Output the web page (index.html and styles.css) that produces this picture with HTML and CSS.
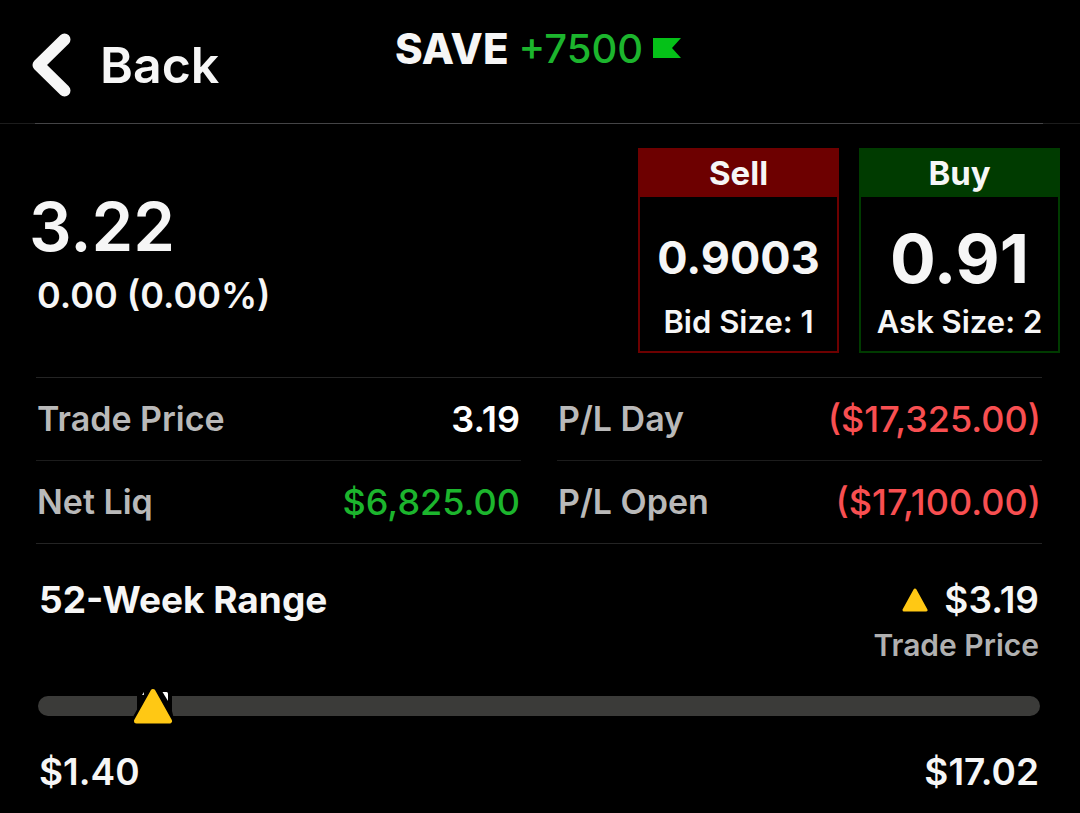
FILE: index.html
```html
<!DOCTYPE html>
<html lang="en">
<head>
<meta charset="utf-8">
<meta name="viewport" content="width=device-width, initial-scale=1">
<title>SAVE quote</title>
<link rel="stylesheet" href="styles.css">
</head>
<body>
<header class="topbar">
  <div class="topbar-side">
    <button class="back" type="button">
      <svg class="back-icon" viewBox="0 0 40 64" aria-hidden="true"><path d="M32.500 6.500L6.500 32L32.500 57.500" fill="none" stroke="currentColor" stroke-width="12" stroke-linecap="round" stroke-linejoin="round"/></svg>
      Back
    </button>
  </div>
  <h1 class="title">
    <span class="symbol">SAVE</span>
    <span class="position">+7500</span>
    <svg class="flag" viewBox="0 0 28 20" aria-hidden="true"><path d="M0 0H28L19 10L28 20H0Z" fill="currentColor"/></svg>
  </h1>
  <div class="topbar-side"></div>
</header>
<main>
  <section class="quote">
    <div class="last">
      <div class="last-price">3.22</div>
      <div class="last-change">0.00 (0.00%)</div>
    </div>
    <div class="orders">
      <button class="order sell" type="button">
        <span class="order-head">Sell</span>
        <span class="order-price">0.9003</span>
        <span class="order-size">Bid Size: 1</span>
      </button>
      <button class="order buy" type="button">
        <span class="order-head">Buy</span>
        <span class="order-price large">0.91</span>
        <span class="order-size">Ask Size: 2</span>
      </button>
    </div>
  </section>
  <dl class="stats">
    <div class="stat"><dt>Trade Price</dt><dd>3.19</dd></div>
    <div class="stat"><dt>P/L Day</dt><dd class="loss">($17,325.00)</dd></div>
    <div class="stat"><dt>Net Liq</dt><dd class="gain">$6,825.00</dd></div>
    <div class="stat"><dt>P/L Open</dt><dd class="loss">($17,100.00)</dd></div>
  </dl>
  <section class="range">
    <div class="range-top">
      <h2 class="range-title">52-Week Range</h2>
      <div class="range-now">
        <div class="range-price">
          <svg class="up" viewBox="0 0 26 24" aria-hidden="true"><path d="M13 2L24 22H2Z" fill="#ffc814" stroke="#ffc814" stroke-width="3" stroke-linejoin="round"/></svg>
          <span>$3.19</span>
        </div>
        <div class="range-label">Trade Price</div>
      </div>
    </div>
    <div class="track" role="meter" aria-label="52-Week Range" aria-valuemin="1.40" aria-valuemax="17.02" aria-valuenow="3.19">
      <svg class="marker" style="left: 11.46%" viewBox="0 0 46 42" aria-hidden="true">
        <path d="M7 8H42V26L44 34L40 39H5L1 35L7 26Z" fill="#000"/>
        <path d="M12 10L14 7V10Z" fill="#ddd"/>
        <path d="M23 6L39.500 36H6.500Z" fill="#000" stroke="#000" stroke-width="10" stroke-linejoin="round"/>
        <path d="M32.500 7H36.500Q38 7 38 8.500V16Z" fill="#fff"/>
        <path d="M23 6.500L39.500 36H6.500Z" fill="#ffc814" stroke="#ffc814" stroke-width="5" stroke-linejoin="round"/>
      </svg>
    </div>
    <div class="range-ends"><span>$1.40</span><span>$17.02</span></div>
  </section>
</main>
</body>
</html>
```
FILE: styles.css
```css
* {
  box-sizing: border-box;
}

body {
  margin: 0;
  background: #000;
  color: #f6f6f6;
  font-family: Inter, "Liberation Sans", sans-serif;
  font-weight: 600;
}

h1, h2, dl, dd {
  margin: 0;
}

button {
  border: 0;
  padding: 0;
  background: none;
  color: inherit;
  font: inherit;
  cursor: pointer;
}

.topbar {
  display: flex;
  height: 124px;
  padding: 0 36px 0 32px;
  border-bottom: 1px solid;
  border-image: linear-gradient(to right, #1c1c1c 36px, #444446 36px, #444446 calc(100% - 38px), #1c1c1c calc(100% - 38px)) 1;
}

.topbar-side {
  flex: 1;
  display: flex;
  align-items: center;
  padding-top: 6px;
}

.back {
  display: flex;
  align-items: center;
  gap: 28px;
  font-size: 50px;
  line-height: 64px;
}

.back-icon {
  width: 40px;
  height: 64px;
}

.title {
  display: flex;
  align-items: center;
  gap: 10px;
  height: 96px;
  font-size: 40px;
}

.symbol {
  font-size: 42px;
  font-weight: 800;
}

.position {
  font-weight: 500;
  color: #1cb52d;
}

.flag {
  width: 28px;
  height: 20px;
  color: #05c118;
}

.quote {
  display: flex;
  justify-content: space-between;
  align-items: center;
  padding: 24px 20px 24px 29px;
}

.last {
  padding-top: 8px;
}

.last-price {
  font-size: 67px;
  line-height: 80px;
}

.last-change {
  padding-left: 8px;
  font-size: 36px;
  line-height: 56px;
}

.orders {
  display: flex;
  gap: 20px;
}

.order {
  display: flex;
  flex-direction: column;
  align-items: center;
  width: 201px;
  height: 205px;
  border: 2px solid;
}

.sell {
  border-color: #6d0000;
}

.buy {
  border-color: #003b00;
}

.order-head {
  align-self: stretch;
  font-size: 33px;
  line-height: 47px;
  font-weight: 700;
}

.sell .order-head {
  background: #6d0000;
}

.buy .order-head {
  background: #003b00;
}

.order-price {
  padding-top: 16px;
  font-size: 45px;
  line-height: 90px;
  font-weight: 700;
}

.order-price.large {
  font-size: 68px;
}

.order-size {
  font-size: 31px;
  line-height: 38px;
}

.stats {
  display: grid;
  grid-template-columns: 1fr 1fr;
  column-gap: 36px;
  margin: 0 38px 0 36px;
  border-top: 1px solid #242424;
  border-bottom: 1px solid #242424;
}

.stat {
  display: flex;
  justify-content: space-between;
  padding: 0 1px;
  font-size: 36px;
  line-height: 82px;
}

.stat:nth-child(-n+2) {
  border-bottom: 1px solid #1c1c1c;
}

.stat dt {
  color: #b9b9b9;
  font-size: 34px;
}

.stat dd {
  color: #fff;
}

.stat .gain {
  color: #1cb52d;
  font-weight: 500;
}

.stat .loss {
  color: #f84f51;
  font-weight: 500;
}

.range {
  padding: 32px 40px 16px 38px;
}

.range-top,
.range-ends {
  display: flex;
  justify-content: space-between;
  padding: 0 1px;
}

.range-top {
  line-height: 48px;
}

.range-title,
.range-price,
.range-ends {
  font-size: 37px;
}

.range-title {
  font-weight: 700;
}

.range-price {
  display: flex;
  align-items: center;
  justify-content: flex-end;
  gap: 16px;
}

.up {
  width: 26px;
  height: 24px;
}

.range-label {
  color: #b0b0b0;
  font-size: 30px;
  line-height: 42px;
}

.track {
  position: relative;
  height: 20px;
  margin: 30px 0 24px;
  border-radius: 10px;
  background: #3b3b39;
}

.marker {
  position: absolute;
  top: -11px;
  width: 46px;
  height: 42px;
  margin-left: -23px;
}

.range-ends {
  line-height: 64px;
}
```
